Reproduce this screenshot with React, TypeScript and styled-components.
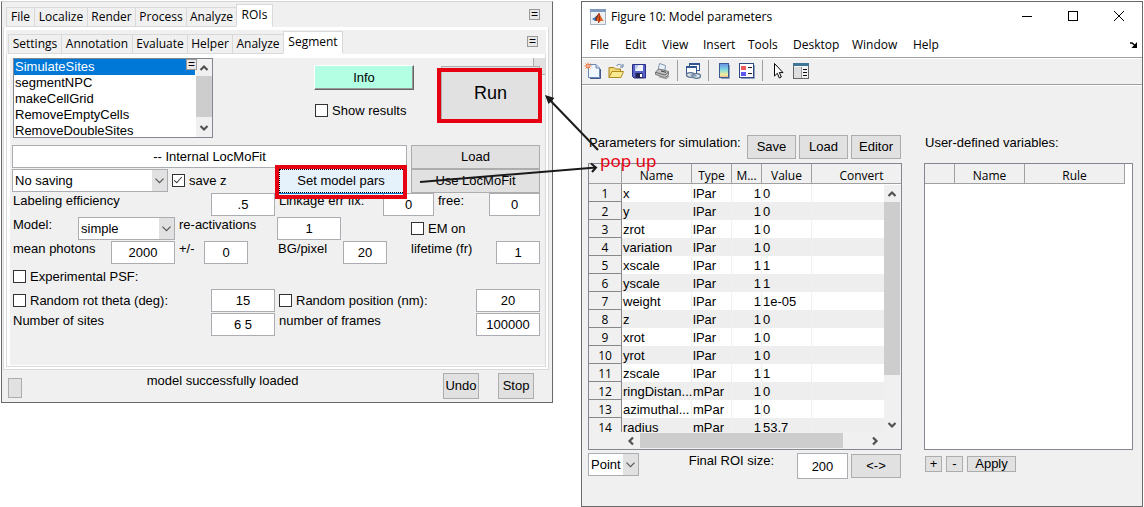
import React, { useId } from "react";
import styled, { createGlobalStyle, css } from "styled-components";

const GlobalStyle = createGlobalStyle`
  *, *::before, *::after { box-sizing: border-box; }
  body { margin: 0; background: #fff; color: #000; font: 13px/15px "Liberation Sans", Arial, sans-serif; }
  button, input, select { font: inherit; color: inherit; margin: 0; border-radius: 0; }
`;

const uiFont = css`
  font-family: "Open Sans", "Noto Sans", sans-serif;
  font-size: 12px;
  line-height: 16px;
`;

const chrome = "#f0f0f0";
const edge = "#696969";
const line = "#adadad";
const red = "#e60012";

/* ---------- shared parts ---------- */

const Desktop = styled.main`
  display: grid;
  grid-template-columns: minmax(0, 552fr) minmax(0, 562fr);
  column-gap: 28px;
  align-items: start;
  padding: 1px 1px 0;
`;

const Window = styled.section`
  position: relative;
  border: 1px solid ${edge};
  background: ${chrome};
  min-width: 0;
`;

const Button = styled.button<{ $small?: boolean }>`
  border: 1px solid ${line};
  background: #e1e1e1;
  padding: 0;
  width: 100%;
  height: ${(p) => (p.$small ? "16px" : "24px")};
  line-height: 14px;
  text-align: center;
  white-space: nowrap;
`;

const TextBox = styled.input`
  border: 1px solid #abadb3;
  background: #fff;
  width: 100%;
  min-width: 0;
  height: 23px;
  padding: 0;
  text-align: center;
`;

const DropWrap = styled.span`
  display: block;
  position: relative;
  height: 23px;
`;

const DropSelect = styled.select`
  appearance: none;
  width: 100%;
  height: 100%;
  border: 1px solid #abadb3;
  background: linear-gradient(#e1e1e1, #e1e1e1) right / 15px 100% no-repeat #fff;
  padding: 0 16px 0 2px;
`;

const DropArrow = styled.svg`
  position: absolute;
  right: 4px;
  top: 9px;
  pointer-events: none;
`;

const Check = styled.input`
  appearance: none;
  flex: none;
  position: relative;
  width: 13px;
  height: 13px;
  border: 1px solid #333;
  background: #fff;
  &:checked::before {
    content: "";
    position: absolute;
    left: 3px;
    top: 0;
    width: 4px;
    height: 8px;
    border: solid #333;
    border-width: 0 1px 1px 0;
    transform: rotate(42deg);
  }
`;

const CheckLabel = styled.label`
  display: flex;
  align-items: center;
  gap: 4px;
  height: 23px;
  white-space: nowrap;
  &:first-child { padding-left: 1px; }
`;

const FieldLabel = styled.label`
  white-space: nowrap;
  &:first-child { padding-left: 1px; }
`;

const Mark = styled.span<{ $inset: string }>`
  position: absolute;
  inset: ${(p) => p.$inset};
  z-index: 2;
  border: 4px solid ${red};
  pointer-events: none;
`;

const Marked = styled.div`
  position: relative;
`;

function Chevron({ dir, className }: { dir: "up" | "down" | "left" | "right"; className?: string }) {
  const turn = { up: 180, down: 0, left: 90, right: 270 }[dir];
  return (
    <svg className={className} width="10" height="10" viewBox="0 0 10 10" aria-hidden="true">
      <path d="M1.5 3 L5 6.5 L8.5 3" fill="none" stroke="#505050" strokeWidth="2.2" transform={`rotate(${turn} 5 5)`} />
    </svg>
  );
}

function Drop({ label, options }: { label: string; options: string[] }) {
  return (
    <DropWrap>
      <DropSelect aria-label={label} defaultValue={options[0]}>
        {options.map((o) => (
          <option key={o}>{o}</option>
        ))}
      </DropSelect>
      <DropArrow width="9" height="6" viewBox="0 0 9 6" aria-hidden="true">
        <path d="M0.5 0.7 L4.5 4.7 L8.5 0.7" fill="none" stroke="#555" strokeWidth="1.2" />
      </DropArrow>
    </DropWrap>
  );
}

function Tick({ children, checked }: { children: string; checked?: boolean }) {
  return (
    <CheckLabel>
      <Check type="checkbox" defaultChecked={checked} />
      {children}
    </CheckLabel>
  );
}

function Field({ label, value }: { label: string; value: string }) {
  const id = useId();
  return (
    <>
      <FieldLabel htmlFor={id}>{label}</FieldLabel>
      <TextBox id={id} defaultValue={value} />
    </>
  );
}

/* ---------- left window ---------- */

const LeftWindow = styled(Window)`
  border-top-color: #d4d4d4;
`;

const TabBar = styled.nav`
  ${uiFont}
  position: relative;
  z-index: 1;
  display: flex;
  align-items: flex-end;
  height: 24px;
  background: ${chrome};
  margin-bottom: -1px;
`;

const OuterTabs = styled(TabBar)`
  height: 25px;
  padding-left: 4px;
`;

const InnerTabs = styled(TabBar)`
  padding-left: 2px;
`;

const Tab = styled.button<{ $w: number; $active?: boolean }>`
  flex: 0 1 ${(p) => p.$w}px;
  height: ${(p) => (p.$active ? 23 : 20)}px;
  border: 1px solid #d9d9d9;
  border-right-width: ${(p) => (p.$active ? 1 : 0)}px;
  border-bottom-color: ${(p) => (p.$active ? "#fff" : "#d9d9d9")};
  background: ${(p) => (p.$active ? "#fff" : chrome)};
  padding: 0 0 ${(p) => (p.$active ? 2 : 0)}px;
  white-space: nowrap;
`;

const MiniButton = styled.button`
  position: absolute;
  width: 11px;
  height: 11px;
  padding: 0;
  border: 1px solid #999;
  background: #e8e8e8;
  font-family: "Liberation Sans", Arial, sans-serif;
  font-size: 12px;
  line-height: 9px;
`;

const OuterMini = styled(MiniButton)`
  right: 12px;
  top: 7px;
`;

const InnerMini = styled(MiniButton)`
  right: 8px;
  top: 6px;
`;

const ListMini = styled(MiniButton)`
  right: 16px;
  top: 1px;
`;

const OuterPane = styled.div`
  margin: 0 3px 0 1px;
  border: 1px solid #d9d9d9;
  background: #fff;
  padding: 3px 2px 2px;
`;

const InnerPane = styled.div`
  border: 1px solid #d9d9d9;
  padding: 4px 0 1px 3px;
  background: #fff;
`;

const PaneBody = styled.div`
  position: relative;
  background: ${chrome};
  padding: 0 5px 28px 2px;
`;

const CornerButton = styled.span`
  position: absolute;
  right: 0;
  top: 0;
  width: 12px;
  height: 17px;
  border: solid ${line};
  border-width: 0 0 1px 1px;
  background: #e1e1e1;
`;

const TopArea = styled.div`
  display: grid;
  grid-template-columns: minmax(0, 302fr) minmax(0, 127fr) minmax(0, 99fr);
  align-items: start;
  padding-bottom: 7px;
`;

const ListBox = styled.div`
  position: relative;
  width: 200px;
  max-width: 100%;
  height: 80px;
  margin-left: 1px;
`;

const ListSelect = styled.select`
  display: block;
  width: 100%;
  height: 100%;
  border: 1px solid #828790;
  background: #fff;
  padding: 0 17px 0 0;
  overflow: hidden;
  scrollbar-width: none;
  outline: 0;
  option {
    height: 16px;
    min-height: 16px;
    padding: 0 0 0 1px;
    line-height: 16px;
  }
  option:checked {
    background: linear-gradient(#0078d7, #0078d7);
    color: #fff;
    -webkit-text-fill-color: #fff;
  }
`;

const ScrollTrack = styled.div`
  position: absolute;
  display: flex;
  align-items: center;
  background: ${chrome};
`;

const ListScroll = styled(ScrollTrack)`
  right: 1px;
  top: 1px;
  bottom: 1px;
  width: 16px;
  flex-direction: column;
  padding: 4px 0;
`;

const Thumb = styled.span`
  flex: 1;
  align-self: stretch;
  background: #cdcdcd;
`;

const ListThumb = styled(Thumb)`
  margin: 3px 0 6px;
`;

const InfoArea = styled.div`
  display: flex;
  flex-direction: column;
  gap: 9px;
  padding-top: 7px;
  ${CheckLabel} { padding-left: 1px; }
`;

const InfoButton = styled(Button)`
  width: 100px;
  height: 25px;
  background: #b2ffe3;
  border: 1px solid;
  border-color: #fff #666 #666 #fff;
  box-shadow: inset -1px -1px #999;
`;

const RunArea = styled(Marked)`
  margin-top: 8px;
`;

const RunButton = styled(Button)`
  height: 54px;
  font-size: 18px;
`;

const SetButton = styled(Button)`
  height: 24px;
  background: #e5f1fb;
  border: 1px dotted #000;
  padding-right: 4px;
  box-shadow: 0 1px #0078d7;
`;

const Row = styled.div<{ $cols: number[] }>`
  display: grid;
  grid-template-columns: ${(p) => p.$cols.map((c) => `minmax(0, ${c}fr)`).join(" ")};
  column-gap: 4px;
  height: 24px;
`;

const StatusBar = styled.footer`
  display: grid;
  grid-template-columns: 14px minmax(0, 1fr) 36px 36px;
  column-gap: 19px;
  align-items: start;
  padding: 3px 18px 3px 6px;
`;

const StatusText = styled.output`
  text-align: center;
  white-space: nowrap;
  padding-right: 20px;
`;

const StubButton = styled(Button)`
  height: 20px;
  margin-top: 5px;
`;

const StatusButton = styled(Button)`
  height: 26px;
`;

const outerTabs: [string, number][] = [["File", 28], ["Localize", 53], ["Render", 48], ["Process", 51], ["Analyze", 50], ["ROIs", 37]];
const innerTabs: [string, number][] = [["Settings", 53], ["Annotation", 71], ["Evaluate", 55], ["Helper", 45], ["Analyze", 51], ["Segment", 60]];
const plugins = ["SimulateSites", "segmentNPC", "makeCellGrid", "RemoveEmptyCells", "RemoveDoubleSites"];

function SmapWindow() {
  return (
    <LeftWindow>
      <OuterTabs>
        {outerTabs.map(([t, w]) => (
          <Tab key={t} $w={w} $active={t === "ROIs"}>{t}</Tab>
        ))}
        <OuterMini>=</OuterMini>
      </OuterTabs>
      <OuterPane>
        <InnerTabs>
          {innerTabs.map(([t, w]) => (
            <Tab key={t} $w={w} $active={t === "Segment"}>{t}</Tab>
          ))}
          <InnerMini>=</InnerMini>
        </InnerTabs>
        <InnerPane>
          <PaneBody>
            <CornerButton />
            <TopArea>
              <ListBox>
                <ListSelect size={5} aria-label="Plugin" defaultValue={plugins[0]}>
                  {plugins.map((p) => (
                    <option key={p}>{p}</option>
                  ))}
                </ListSelect>
                <ListScroll>
                  <Chevron dir="up" />
                  <ListThumb />
                  <Chevron dir="down" />
                </ListScroll>
                <ListMini>=</ListMini>
              </ListBox>
              <InfoArea>
                <InfoButton>Info</InfoButton>
                <Tick>Show results</Tick>
              </InfoArea>
              <RunArea>
                <RunButton>Run</RunButton>
                <Mark $inset="2px -2px -3px -4px" />
              </RunArea>
            </TopArea>
            <Row $cols={[395, 129]}>
              <TextBox aria-label="Localization source" defaultValue="-- Internal LocMoFit" />
              <Button>Load</Button>
            </Row>
            <Row $cols={[156, 103, 128, 129]}>
              <Drop label="Saving" options={["No saving"]} />
              <Tick checked>save z</Tick>
              <Marked>
                <SetButton>Set model pars</SetButton>
                <Mark $inset="-4px 0 -6px -4px" />
              </Marked>
              <Button>Use LocMoFit</Button>
            </Row>
            <Row $cols={[195, 64, 100, 51, 47, 51]}>
              <Field label="Labeling efficiency" value=".5" />
              <Field label="Linkage err fix:" value="0" />
              <Field label="free:" value="0" />
            </Row>
            <Row $cols={[62, 97, 94, 64, 62, 129]}>
              <FieldLabel as="span">Model:</FieldLabel>
              <Drop label="Model" options={["simple"]} />
              <Field label="re-activations" value="1" />
              <span />
              <Tick>EM on</Tick>
            </Row>
            <Row $cols={[95, 64, 21, 44, 22, 61, 44, 16, 81, 44]}>
              <Field label="mean photons" value="2000" />
              <Field label="+/-" value="0" />
              <span />
              <Field label="BG/pixel" value="20" />
              <span />
              <Field label="lifetime (fr)" value="1" />
            </Row>
            <Row $cols={[1]}>
              <Tick>Experimental PSF:</Tick>
            </Row>
            <Row $cols={[195, 64, 193, 64]}>
              <Tick>Random rot theta (deg):</Tick>
              <TextBox aria-label="Random rot theta" defaultValue="15" />
              <Tick>Random position (nm):</Tick>
              <TextBox aria-label="Random position" defaultValue="20" />
            </Row>
            <Row $cols={[195, 64, 193, 64]}>
              <Field label="Number of sites" value="6 5" />
              <Field label="number of frames" value="100000" />
            </Row>
          </PaneBody>
        </InnerPane>
      </OuterPane>
      <StatusBar>
        <StubButton aria-label="Status details" />
        <StatusText>model successfully loaded</StatusText>
        <StatusButton>Undo</StatusButton>
        <StatusButton>Stop</StatusButton>
      </StatusBar>
    </LeftWindow>
  );
}

/* ---------- right window ---------- */

const TitleBar = styled.header`
  ${uiFont}
  display: flex;
  align-items: center;
  height: 30px;
  padding: 0 17px 0 8px;
  background: #fff;
`;

const Title = styled.h1`
  font: inherit;
  margin: 0 auto 0 5px;
  white-space: nowrap;
`;

const WinControls = styled.div`
  display: flex;
  gap: 34px;
`;

const WinButton = styled.button`
  border: 0;
  background: none;
  padding: 0;
  width: 12px;
  height: 12px;
  svg { display: block; }
`;

const MenuBar = styled.nav`
  ${uiFont}
  display: flex;
  align-items: center;
  height: 25px;
  padding: 0 4px 0 8px;
  background: #fff;
`;

const MenuItem = styled.button<{ $w: number }>`
  flex: 0 0 ${(p) => p.$w}px;
  border: 0;
  background: none;
  padding: 0;
  text-align: left;
`;

const DockArrow = styled.svg`
  margin-left: auto;
`;

const ToolBar = styled.div`
  display: flex;
  align-items: center;
  gap: 7px;
  height: 29px;
  border-top: 1px solid #a0a0a0;
  border-bottom: 1px solid #fff;
  box-shadow: inset 0 1px #fff, inset 0 -1px #a0a0a0;
  padding: 0 3px 2px;
`;

const ToolButton = styled.button`
  border: 0;
  background: none;
  padding: 0;
  width: 16px;
  height: 16px;
  svg { display: block; overflow: visible; }
`;

const ToolSep = styled.span`
  width: 1px;
  height: 21px;
  background: #a0a0a0;
`;

const Body = styled.div`
  display: grid;
  grid-template-columns: minmax(0, 314fr) minmax(0, 209fr);
  column-gap: 22px;
  padding: 49px 9px 27px 6px;
`;

const Column = styled.section`
  display: flex;
  flex-direction: column;
  min-width: 0;
`;

const Head = styled.div`
  display: grid;
  grid-template-columns: minmax(0, 1fr) 49px 49px 50px;
  column-gap: 3px;
  height: 24px;
  padding-right: 1px;
  margin-bottom: 4px;
`;

const HeadText = styled.h2`
  font: inherit;
  margin: 0;
  padding-left: 1px;
  white-space: nowrap;
`;

const TableFrame = styled.div<{ $blank?: boolean }>`
  position: relative;
  height: 287px;
  border: 1px solid #828790;
  background: ${(p) => (p.$blank ? "#fff" : chrome)};
  overflow: hidden;
`;

const TableClip = styled.div`
  height: 268px;
  overflow: hidden;
`;

const Table = styled.table<{ $wide?: boolean }>`
  width: ${(p) => (p.$wide ? "calc(100% + 11px)" : "calc(100% - 7px)")};
  table-layout: fixed;
  border-collapse: separate;
  border-spacing: 0;
`;

const Th = styled.th`
  ${uiFont}
  height: 20px;
  padding: 3px 0 0;
  font-weight: 400;
  line-height: 15px;
  text-align: center;
  background: ${chrome};
  border: solid #a0a0a0;
  border-width: 0 1px 1px 0;
`;

const RowTh = styled(Th)`
  height: 18px;
  padding: 1px 0 0;
  border-color: #888;
`;

const Td = styled.td<{ $right?: boolean }>`
  height: 18px;
  padding: 0 0 0 1px;
  line-height: 17px;
  white-space: nowrap;
  text-align: ${(p) => (p.$right ? "right" : "left")};
  border-right: 1px solid ${chrome};
`;

const Tr = styled.tr`
  background: #fff;
  &:nth-child(even) { background: #eee; }
`;

const VScroll = styled(ScrollTrack)`
  right: 0;
  top: 21px;
  width: 17px;
  height: 248px;
  flex-direction: column;
  padding: 4px 1px 3px 0;
`;

const VThumb = styled(Thumb)`
  flex: none;
  height: 173px;
  margin: 3px 0 auto;
`;

const HScroll = styled(ScrollTrack)`
  left: 33px;
  right: 17px;
  bottom: 0;
  height: 17px;
  padding: 1px 4px;
`;

const HThumb = styled(Thumb)`
  margin: 0 27px 0 4px;
`;

const Foot = styled.div`
  display: grid;
  grid-template-columns: 51px minmax(0, 1fr) 51px 50px;
  column-gap: 3px;
  align-items: start;
  padding: 3px 1px 0 0;
`;

const FootLabel = styled.label`
  padding-right: 20px;
  text-align: right;
  white-space: nowrap;
`;

const FootBox = styled(TextBox)`
  height: 26px;
`;

const FootButton = styled(Button)`
  margin-top: 1px;
`;

const VarButtons = styled.div`
  display: grid;
  grid-template-columns: 17px 17px 49px;
  column-gap: 4px;
  padding: 6px 0 0 1px;
`;

const Arrows = styled.svg`
  position: absolute;
  left: -167px;
  top: 88px;
  z-index: 3;
  pointer-events: none;
`;

const Callout = styled.span`
  position: absolute;
  left: 18px;
  top: 148px;
  z-index: 3;
  color: ${red};
  font: 17px/22px "Noto Sans", "Open Sans", sans-serif;
`;

const menus: [string, number][] = [["File", 35], ["Edit", 37], ["View", 41], ["Insert", 45], ["Tools", 45], ["Desktop", 59], ["Window", 61], ["Help", 40]];

const params: [string, string, string][] = [
  ["x", "lPar", "0"],
  ["y", "lPar", "0"],
  ["zrot", "lPar", "0"],
  ["variation", "lPar", "0"],
  ["xscale", "lPar", "1"],
  ["yscale", "lPar", "1"],
  ["weight", "lPar", "1e-05"],
  ["z", "lPar", "0"],
  ["xrot", "lPar", "0"],
  ["yrot", "lPar", "0"],
  ["zscale", "lPar", "1"],
  ["ringDistan...", "mPar", "0"],
  ["azimuthal...", "mPar", "0"],
  ["radius", "mPar", "53.7"],
];

const MatlabIcon = () => (
  <svg width="16" height="16" viewBox="0 0 16 16" aria-hidden="true">
    <rect x="0.5" y="0.5" width="15" height="15" fill="#eef0f4" stroke="#a9b4c2" />
    <rect width="16" height="3" fill="#7f9cc0" />
    <path d="M2 10 L6 7.5 L8 10 L5 12 Z" fill="#3a7fc0" />
    <path d="M6 7.5 L9 4 L8.5 9.5 L7 12 L5 11.5 Z" fill="#7a2a1a" />
    <path d="M9 4 C11 7 12 10 14 12.5 C12 11 10.5 11.5 8.5 14 C8 12 7.5 11.5 6.5 11.5 Z" fill="#e2601c" />
    <path d="M9 4 L9.5 10 L8.5 14" fill="none" stroke="#a02c12" />
  </svg>
);

const tools: Record<string, React.ReactNode> = {
  "New Figure": (
    <>
      <path d="M3.5 1.5 H11 L14.5 5 V14.5 H3.5 Z" fill="#f1f7fe" stroke="#6c87b5" />
      <path d="M11 1.5 V5 H14.5" fill="#c9dbf2" stroke="#6c87b5" />
      <path d="M15.5 6 V15.5 H5" fill="none" stroke="#41598a" />
      <path d="M3 -0.5 V6 M-0.5 3 H6.5 M0.5 0.5 L5.5 5.5 M5.5 0.5 L0.5 5.5" stroke="#e87a45" />
      <circle cx="3" cy="3" r="1.3" fill="#fff" stroke="#e87a45" />
    </>
  ),
  "Open File": (
    <>
      <path d="M1 14.5 V4.5 H6 L7.5 6 H12.5 V14.5 Z" fill="#f3d873" stroke="#a8841d" />
      <path d="M1 14.5 L4 8.5 H15.5 L13 14.5 Z" fill="#fbe98f" stroke="#b08d22" />
      <path d="M8.5 3 C10 0.5 13 1 14.5 3.5 M15 1 V4 H12" fill="none" stroke="#5d7da6" />
    </>
  ),
  "Save Figure": (
    <>
      <path d="M1.5 1.5 H14.5 V15 H3 L1.5 13.5 Z" fill="#5560c8" stroke="#2b2f83" />
      <rect x="4" y="2" width="8" height="6" fill="#eef2fb" />
      <path d="M4 2 H8 L4 8 Z" fill="#b9c9ee" />
      <rect x="4.5" y="10" width="7" height="5" fill="#20234f" />
      <rect x="9" y="11" width="2" height="3" fill="#fff" />
    </>
  ),
  "Print Figure": (
    <>
      <path d="M4 7 L5.5 0.5 L11.5 2.5 L11 7 Z" fill="#eaf3fc" stroke="#8295ad" />
      <path d="M1.5 9 L5 6 L14.5 8.5 V12 L11 14.5 L1.5 11.5 Z" fill="#c3c3c3" stroke="#777" />
      <path d="M2 9.5 L11 12 L14.5 9" fill="none" stroke="#666" />
      <path d="M5 13.5 L12 15.5 L15 13" fill="none" stroke="#999" strokeWidth="1.5" />
      <path d="M7 8 L12 9.3" stroke="#444" />
    </>
  ),
  "Link Plot": (
    <>
      <rect x="4.5" y="0.5" width="10" height="7" fill="#fff" stroke="#31578e" />
      <rect x="4" y="0" width="11" height="2" fill="#31578e" />
      <rect x="1.5" y="3.5" width="10" height="8" fill="#fff" stroke="#31578e" />
      <rect x="1" y="3" width="11" height="2" fill="#31578e" />
      <ellipse cx="5.5" cy="12" rx="4" ry="2.3" fill="#dfe6ee" stroke="#5a7392" strokeWidth="1.3" />
      <ellipse cx="11.5" cy="13" rx="4" ry="2.3" fill="#dfe6ee" stroke="#5a7392" strokeWidth="1.3" />
      <path d="M5.5 12 L11.5 13" stroke="#8196b0" strokeWidth="1.3" />
    </>
  ),
  "Insert Colorbar": (
    <>
      <defs>
        <linearGradient id="bar" x1="0" y1="0" x2="0" y2="1">
          <stop offset="0" stopColor="#6a8fe8" />
          <stop offset="0.45" stopColor="#7fdbe0" />
          <stop offset="0.8" stopColor="#f3ee9b" />
          <stop offset="1" stopColor="#f0b089" />
        </linearGradient>
      </defs>
      <rect x="3.5" y="0.5" width="9" height="14" fill="url(#bar)" stroke="#3a5a92" />
      <path d="M13.5 2 V15.5 H5" fill="none" stroke="#8fa2c2" />
    </>
  ),
  "Insert Legend": (
    <>
      <rect x="0.5" y="0.5" width="14" height="14" fill="#fff" stroke="#2f4a80" />
      <path d="M15.5 2 V15.5 H2" fill="none" stroke="#8fa2c2" />
      <rect x="2" y="3" width="5" height="4" fill="#ea5a5a" />
      <rect x="2" y="9" width="5" height="4" fill="#5a5af0" />
      <path d="M9 4.5 H13 M9 10.5 H13" stroke="#222" />
    </>
  ),
  "Edit Plot": (
    <path d="M4.5 0.5 V13 L7.3 10.3 L9.3 15 L11.3 14 L9.3 9.6 H13 Z" fill="#fff" stroke="#000" />
  ),
  "Property Inspector": (
    <>
      <rect x="0.5" y="0.5" width="15" height="15" fill="#f4f4f4" stroke="#666" />
      <rect x="0" y="0" width="16" height="3" fill="#3f7698" />
      <rect x="1" y="4" width="7" height="11" fill="#dedede" />
      <path d="M8.5 4 V15" stroke="#999" />
      <path d="M10 6.5 H14 M10 9.5 H14 M10 12.5 H14" stroke="#111" />
    </>
  ),
};

const toolOrder = ["New Figure", "Open File", "Save Figure", "Print Figure", "|", "Link Plot", "|", "Insert Colorbar", "Insert Legend", "|", "Edit Plot", "Property Inspector"];

function FigureWindow() {
  const roi = useId();
  return (
    <Window>
      <TitleBar>
        <MatlabIcon />
        <Title>Figure 10: Model parameters</Title>
        <WinControls>
          <WinButton aria-label="Minimize">
            <svg width="12" height="12"><path d="M1 5.5 H11" stroke="#000" /></svg>
          </WinButton>
          <WinButton aria-label="Maximize">
            <svg width="12" height="12"><rect x="1.5" y="0.5" width="9" height="9" fill="none" stroke="#000" /></svg>
          </WinButton>
          <WinButton aria-label="Close">
            <svg width="12" height="12"><path d="M1 0 L11 10 M11 0 L1 10" stroke="#000" /></svg>
          </WinButton>
        </WinControls>
      </TitleBar>
      <MenuBar>
        {menus.map(([m, w]) => (
          <MenuItem key={m} $w={w}>{m}</MenuItem>
        ))}
        <DockArrow width="8" height="6" viewBox="0 0 8 6" aria-hidden="true">
          <path d="M0 1 H2 L5 3.5" fill="none" stroke="#000" strokeWidth="1.5" />
          <path d="M7 0 V6 H1.5 Z" fill="#000" />
        </DockArrow>
      </MenuBar>
      <ToolBar>
        {toolOrder.map((t, i) =>
          t === "|" ? (
            <ToolSep key={i} />
          ) : (
            <ToolButton key={t} aria-label={t}>
              <svg width="16" height="16" viewBox="0 0 16 16">{tools[t]}</svg>
            </ToolButton>
          )
        )}
      </ToolBar>
      <Body>
        <Column>
          <Head>
            <HeadText>Parameters for simulation:</HeadText>
            <Button>Save</Button>
            <Button>Load</Button>
            <Button>Editor</Button>
          </Head>
          <TableFrame>
            <TableClip>
              <Table $wide>
                <colgroup>
                  <col style={{ width: 33 }} />
                  <col style={{ width: 70 }} />
                  <col style={{ width: 40 }} />
                  <col style={{ width: 30 }} />
                  <col style={{ width: 50 }} />
                  <col />
                </colgroup>
                <thead>
                  <tr>
                    <Th />
                    <Th>Name</Th>
                    <Th>Type</Th>
                    <Th>M...</Th>
                    <Th>Value</Th>
                    <Th>Convert</Th>
                  </tr>
                </thead>
                <tbody>
                  {params.map(([name, type, value], i) => (
                    <Tr key={name}>
                      <RowTh scope="row">{i + 1}</RowTh>
                      <Td>{name}</Td>
                      <Td>{type}</Td>
                      <Td $right>1</Td>
                      <Td>{value}</Td>
                      <Td />
                    </Tr>
                  ))}
                </tbody>
              </Table>
            </TableClip>
            <VScroll>
              <Chevron dir="up" />
              <VThumb />
              <Chevron dir="down" />
            </VScroll>
            <HScroll>
              <Chevron dir="left" />
              <HThumb />
              <Chevron dir="right" />
            </HScroll>
          </TableFrame>
          <Foot>
            <Drop label="Geometry" options={["Point"]} />
            <FootLabel htmlFor={roi}>Final ROI size:</FootLabel>
            <FootBox id={roi} defaultValue="200" />
            <FootButton>{"<->"}</FootButton>
          </Foot>
        </Column>
        <Column>
          <Head>
            <HeadText>User-defined variables:</HeadText>
          </Head>
          <TableFrame $blank>
            <Table>
              <colgroup>
                <col style={{ width: 30 }} />
                <col style={{ width: 70 }} />
                <col />
              </colgroup>
              <thead>
                <tr>
                  <Th />
                  <Th>Name</Th>
                  <Th>Rule</Th>
                </tr>
              </thead>
            </Table>
          </TableFrame>
          <VarButtons>
            <Button $small>+</Button>
            <Button $small>-</Button>
            <Button $small>Apply</Button>
          </VarButtons>
        </Column>
      </Body>
      <Arrows width="190" height="100" viewBox="0 0 190 100" aria-hidden="true">
        <g fill="none" stroke="#1a1a1a" strokeWidth="2">
          <path d="M183 60 L132 7" />
          <path d="M5 92 L181 77.5" />
          <path d="M176 73.5 L181 77.5 L177 82" />
        </g>
        <path d="M130 5 L139.5 8 L133.5 14 Z" fill="#1a1a1a" />
      </Arrows>
      <Callout>pop up</Callout>
    </Window>
  );
}

export default function App() {
  return (
    <>
      <GlobalStyle />
      <Desktop>
        <SmapWindow />
        <FigureWindow />
      </Desktop>
    </>
  );
}
